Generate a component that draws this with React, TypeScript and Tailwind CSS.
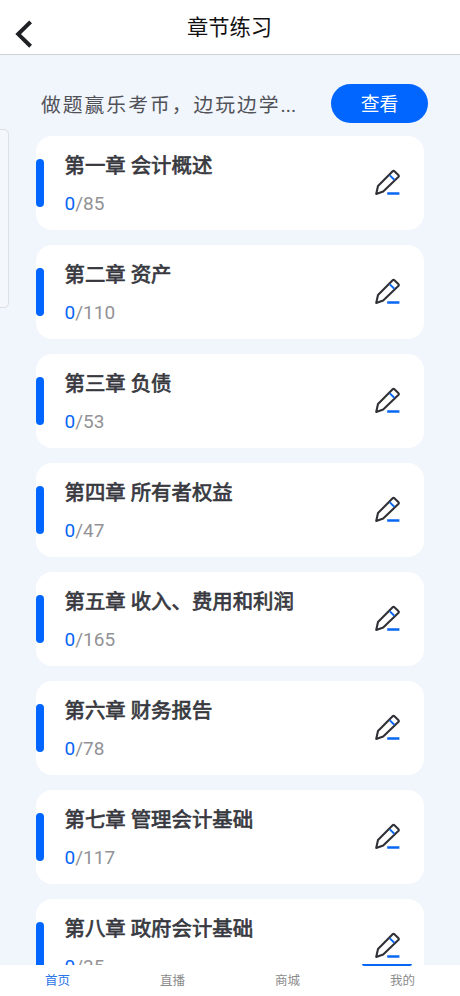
const chapters = [
  { title: "第一章 会计概述", total: 85 },
  { title: "第二章 资产", total: 110 },
  { title: "第三章 负债", total: 53 },
  { title: "第四章 所有者权益", total: 47 },
  { title: "第五章 收入、费用和利润", total: 165 },
  { title: "第六章 财务报告", total: 78 },
  { title: "第七章 管理会计基础", total: 117 },
  { title: "第八章 政府会计基础", total: 35 },
];

const tabs = ["首页", "直播", "商城", "我的"];

const PencilIcon = () => (
  <svg width="28" height="30" viewBox="0 0 28 30" fill="none">
    <path
      d="M2.2 26 L4 18.1 L18.4 3.5 Q19.5 2.4 20.7 3.5 L24.3 6.9 Q25.4 8 24.3 9.1 L9.2 23.4 Z"
      stroke="#303136"
      strokeWidth="2.1"
      strokeLinejoin="round"
    />
    <path d="M15.8 7.4 L20.3 11.8" stroke="#0866f5" strokeWidth="2" />
    <path d="M13.2 25.5 H25.4" stroke="#0866f5" strokeWidth="2.5" />
  </svg>
);

const ChapterCard = ({ title, total }: { title: string; total: number }) => (
  <div className="flex h-[94px] shrink-0 items-center rounded-[16px] bg-white">
    <div className="h-[48px] w-2 rounded-full bg-[#0066ff]" />
    <div className="ml-[20.5px] flex-1 pt-1">
      <h2 className="text-[20.4px] leading-[30px] font-normal text-[#37393f] [-webkit-text-stroke:0.7px_#37393f]">
        {title}
      </h2>
      <p className="mt-2 text-[19px] leading-[30px] text-[#929296]">
        <span className="text-[#0866f5]">0</span>/{total}
      </p>
    </div>
    <div className="mr-[22px]">
      <PencilIcon />
    </div>
  </div>
);

const App = () => {
  return (
    <div className="relative flex h-[996px] w-[460px] flex-col overflow-hidden bg-[#f1f5fc] font-[Roboto,'Noto_Sans_CJK_SC',sans-serif]">
      <header className="flex h-[55px] shrink-0 border-b border-[#cfd0d2] bg-white">
        <div className="w-[60px] pt-[20px] pl-[15px]">
          <svg width="18" height="28" viewBox="0 0 18 28" fill="none">
            <path
              d="M15.6 1.8 L3.2 14.1 L15.6 26.3"
              stroke="#202124"
              strokeWidth="4"
            />
          </svg>
        </div>
        <h1 className="flex-1 pt-[12px] pr-[61px] text-center text-[21.3px] leading-[32px] text-[#111111]">
          章节练习
        </h1>
      </header>

      <main className="min-h-0 flex-1 overflow-hidden pr-9 pl-9">
        <div className="mt-[29px] -mr-1 flex h-[39px] items-center justify-between pl-[5px]">
          <p className="pt-1 text-[19.8px] tracking-[2px] whitespace-nowrap text-[#505258]">
            做题赢乐考币，边玩边学<span className="tracking-normal">...</span>
          </p>
          <button className="h-[39px] w-[97px] rounded-full bg-[#0066ff] pt-[3px] text-[18.8px] text-white">
            查看
          </button>
        </div>
        <div className="mt-[13px] flex flex-col gap-[15px]">
          {chapters.map((chapter) => (
            <ChapterCard key={chapter.title} {...chapter} />
          ))}
        </div>
      </main>

      <nav className="grid h-[31px] shrink-0 grid-cols-4 bg-white text-center text-[12.5px] leading-[32px] text-[#8b8b8b]">
        {tabs.map((tab, i) => (
          <span key={tab} className={i === 0 ? "text-[#2b74e8]" : ""}>
            {tab}
          </span>
        ))}
      </nav>

      {/* drawer edge and the button that peeks out above the tab bar */}
      <div className="absolute top-[129px] -left-2 h-[179px] w-[17px] rounded-[5px] border border-[#dcdfe3] bg-[#f4f7fb]" />
      <div className="absolute top-[964px] left-[362px] h-[2px] w-[50px] rounded-b-full bg-[#0866f5]" />
    </div>
  );
};

export default App;
